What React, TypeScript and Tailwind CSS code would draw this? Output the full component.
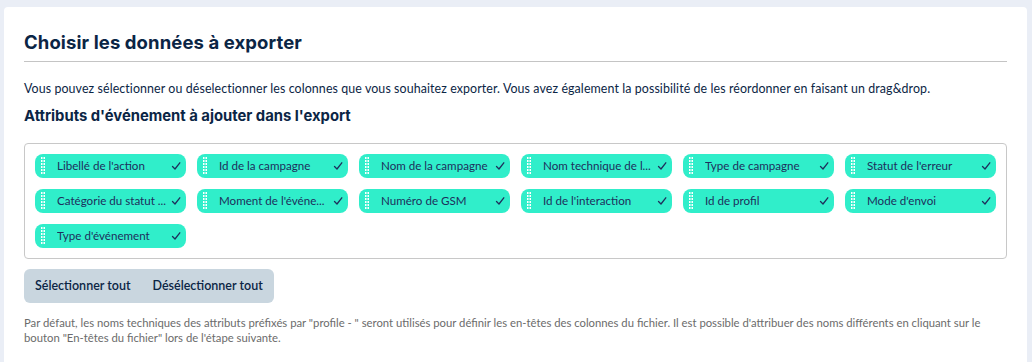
const ATTRIBUTES = [
  "Libellé de l'action",
  "Id de la campagne",
  "Nom de la campagne",
  "Nom technique de l...",
  "Type de campagne",
  "Statut de l'erreur",
  "Catégorie du statut ...",
  "Moment de l'événe...",
  "Numéro de GSM",
  "Id de l'interaction",
  "Id de profil",
  "Mode d'envoi",
  "Type d'événement",
];

function DragHandle() {
  return (
    <svg width="4" height="18" viewBox="0 0 4 18" className="shrink-0">
      {Array.from({ length: 6 }).map((_, i) => (
        <g key={i} fill="#ffffff">
          <rect x="0" y={i * 3} width="1.5" height="2" />
          <rect x="2.5" y={i * 3} width="1.5" height="2" />
        </g>
      ))}
    </svg>
  );
}

function Check() {
  return (
    <svg width="10" height="10" viewBox="0 0 10 10" className="shrink-0">
      <path d="M1.5 5.5 L4 8 L8.8 1.8" fill="none" stroke="#1e2f5c" strokeWidth="1.3" strokeLinecap="round" strokeLinejoin="round" />
    </svg>
  );
}

function Chip({ label }: { label: string }) {
  return (
    <div className="h-[24px] rounded-[8px] bg-[#30eeca] flex items-center pl-[6px] pr-[5px]">
      <DragHandle />
      <span className="ml-[12px] mr-[4px] flex-1 whitespace-nowrap overflow-hidden text-[11.6px] text-[#1e2f5c] leading-none">{label}</span>
      <Check />
    </div>
  );
}

export default function App() {
  return (
    <div className="w-[1032px] h-[362px] bg-[#eaeef6] pt-[7px] pl-[4px] pr-[5px] overflow-hidden" style={{ fontFamily: "Lato, 'Open Sans', sans-serif" }}>
      <div className="bg-white rounded-t-[4px] h-full px-[20px] pt-[22px]">
        <h1 className="text-[18.5px] font-bold text-[#0b2545] leading-[26px] tracking-[0.1px]" style={{ fontFamily: "Inter, sans-serif" }}>
          Choisir les données à exporter
        </h1>
        <div className="mt-[6px] h-px bg-[#c4c4c4]" />
        <p className="mt-[18px] text-[12.4px] tracking-[0.1px] text-[#0b2545] leading-[18px]">
          Vous pouvez sélectionner ou déselectionner les colonnes que vous souhaitez exporter. Vous avez également la possibilité de les réordonner en faisant un drag&amp;drop.
        </p>
        <h2 className="mt-[8px] text-[14.8px] font-bold text-[#0b2545] leading-[20px]" style={{ fontFamily: "Inter, sans-serif" }}>
          Attributs d'événement à ajouter dans l'export
        </h2>
        <div className="mt-[17px] border border-[#c8c8c8] rounded-[4px] p-[10px] grid grid-cols-6 gap-[11px]">
          {ATTRIBUTES.map((a) => (
            <Chip key={a} label={a} />
          ))}
        </div>
        <div className="mt-[10px] inline-flex h-[34px] items-center rounded-[6px] bg-[#c9d6df] px-[11px] gap-[22px] text-[12.5px] font-semibold text-[#0b2545]">
          <button>Sélectionner tout</button>
          <button>Désélectionner tout</button>
        </div>
        <p className="mt-[12px] text-[11.3px] leading-[15px] text-[#6b6b6b]">
          Par défaut, les noms techniques des attributs préfixés par "profile - " seront utilisés pour définir les en-têtes des colonnes du fichier. Il est possible d'attribuer des noms différents en cliquant sur le bouton "En-têtes du fichier" lors de l'étape suivante.
        </p>
      </div>
    </div>
  );
}
